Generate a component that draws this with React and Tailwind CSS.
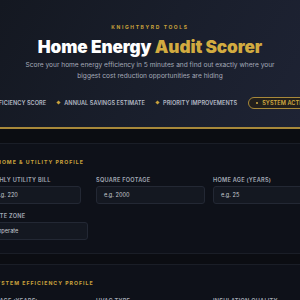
export default function App() {
  const Pill = ({ children }) => (
    <div className="flex items-center gap-[4px] shrink-0">
      <span className="w-[3px] h-[3px] rotate-45 bg-[#c9a23c]" />
      <span>{children}</span>
    </div>
  );
  const Label = ({ children }) => (
    <div className="h-[8px] leading-[8px] text-[5.6px] font-semibold tracking-[0.25px] text-[#a4aab6] whitespace-nowrap">
      {children}
    </div>
  );
  const Input = ({ children, pl = "pl-[7px]" }) => (
    <div className={`mt-[2px] h-[18px] rounded-[3px] border border-[#232834] bg-[#141821] flex items-center ${pl} text-[5.6px] text-[#c6cad2] whitespace-nowrap`}>
      {children}
    </div>
  );
  return (
    <div className="w-[300px] h-[300px] overflow-hidden bg-[#0b0d12] font-[Inter,'Noto_Sans',sans-serif]">
      <div className="h-[129px] border-b-2 border-[#a8893a] bg-[linear-gradient(120deg,#141821_0%,#191e2b_50%,#1e2334_100%)] flex flex-col items-center pt-[23px]">
        <div className="h-[8px] leading-[8px] text-[5px] font-bold tracking-[1.6px] text-[#c9a23c]">KNIGHTBYRD TOOLS</div>
        <div className="mt-[6px] h-[20px] leading-[20px] text-[17.2px] font-black text-white whitespace-nowrap tracking-[-0.1px]">
          Home Energy <span className="text-[#d2ab40]">Audit Scorer</span>
        </div>
        <div className="mt-[3px] text-center text-[6.6px] leading-[11px] text-[#a4aab8] whitespace-nowrap">
          Score your home energy efficiency in 5 minutes and find out exactly where your
          <br />
          biggest cost reduction opportunities are hiding
        </div>
        <div className="self-start ml-[-15px] mt-[15px] h-[12px] flex items-center gap-[11px] text-[5.6px] font-semibold tracking-[0.05px] text-[#b3b8c4] whitespace-nowrap">
          <Pill>EFFICIENCY SCORE</Pill>
          <Pill>ANNUAL SAVINGS ESTIMATE</Pill>
          <Pill>PRIORITY IMPROVEMENTS</Pill>
          <div className="h-[12px] shrink-0 flex items-center gap-[4px] rounded-full border border-[#a8893a] bg-[#221f1c] px-[7px] text-[#d2ab40]">
            <span className="w-[2px] h-[2px] rounded-full bg-[#d2ab40]" />
            <span>SYSTEM ACTIONS</span>
          </div>
        </div>
      </div>

      <div className="ml-[-45px] w-[420px] mt-[14px] border border-[#1a1e27] bg-[#0e1119] pt-[14px] pb-[13px] pl-[25px]">
        <div className="ml-[16px] h-[8px] leading-[8px] text-[5.2px] font-bold tracking-[1px] text-[#c9a23c] whitespace-nowrap">
          HOME &amp; UTILITY PROFILE
        </div>
        <div className="mt-[10px] flex">
          <div className="w-[100px]">
            <Label>MONTHLY UTILITY BILL</Label>
            <Input pl="pl-[14px]">e.g. 220</Input>
          </div>
          <div className="w-[109px] ml-[15px]">
            <Label>SQUARE FOOTAGE</Label>
            <Input>e.g. 2000</Input>
          </div>
          <div className="w-[109px] ml-[8px]">
            <Label>HOME AGE (YEARS)</Label>
            <Input>e.g. 25</Input>
          </div>
        </div>
        <div className="mt-[8px] w-[107px]">
          <Label>CLIMATE ZONE</Label>
          <Input pl="pl-[8px]">Temperate</Input>
        </div>
      </div>

      <div className="ml-[-45px] w-[420px] mt-[10px] border border-[#1a1e27] bg-[#0e1119] pt-[14px] pb-[13px] pl-[25px]">
        <div className="ml-[11px] h-[8px] leading-[8px] text-[5.2px] font-bold tracking-[1px] text-[#c9a23c] whitespace-nowrap">
          SYSTEM EFFICIENCY PROFILE
        </div>
        <div className="mt-[10px] flex">
          <div className="w-[100px]">
            <Label>HVAC AGE (YEARS)</Label>
            <Input>e.g. 12</Input>
          </div>
          <div className="w-[109px] ml-[15px]">
            <Label>HVAC TYPE</Label>
            <Input>Central Air</Input>
          </div>
          <div className="w-[109px] ml-[8px]">
            <Label>INSULATION QUALITY</Label>
            <Input>Average</Input>
          </div>
        </div>
      </div>
    </div>
  );
}
